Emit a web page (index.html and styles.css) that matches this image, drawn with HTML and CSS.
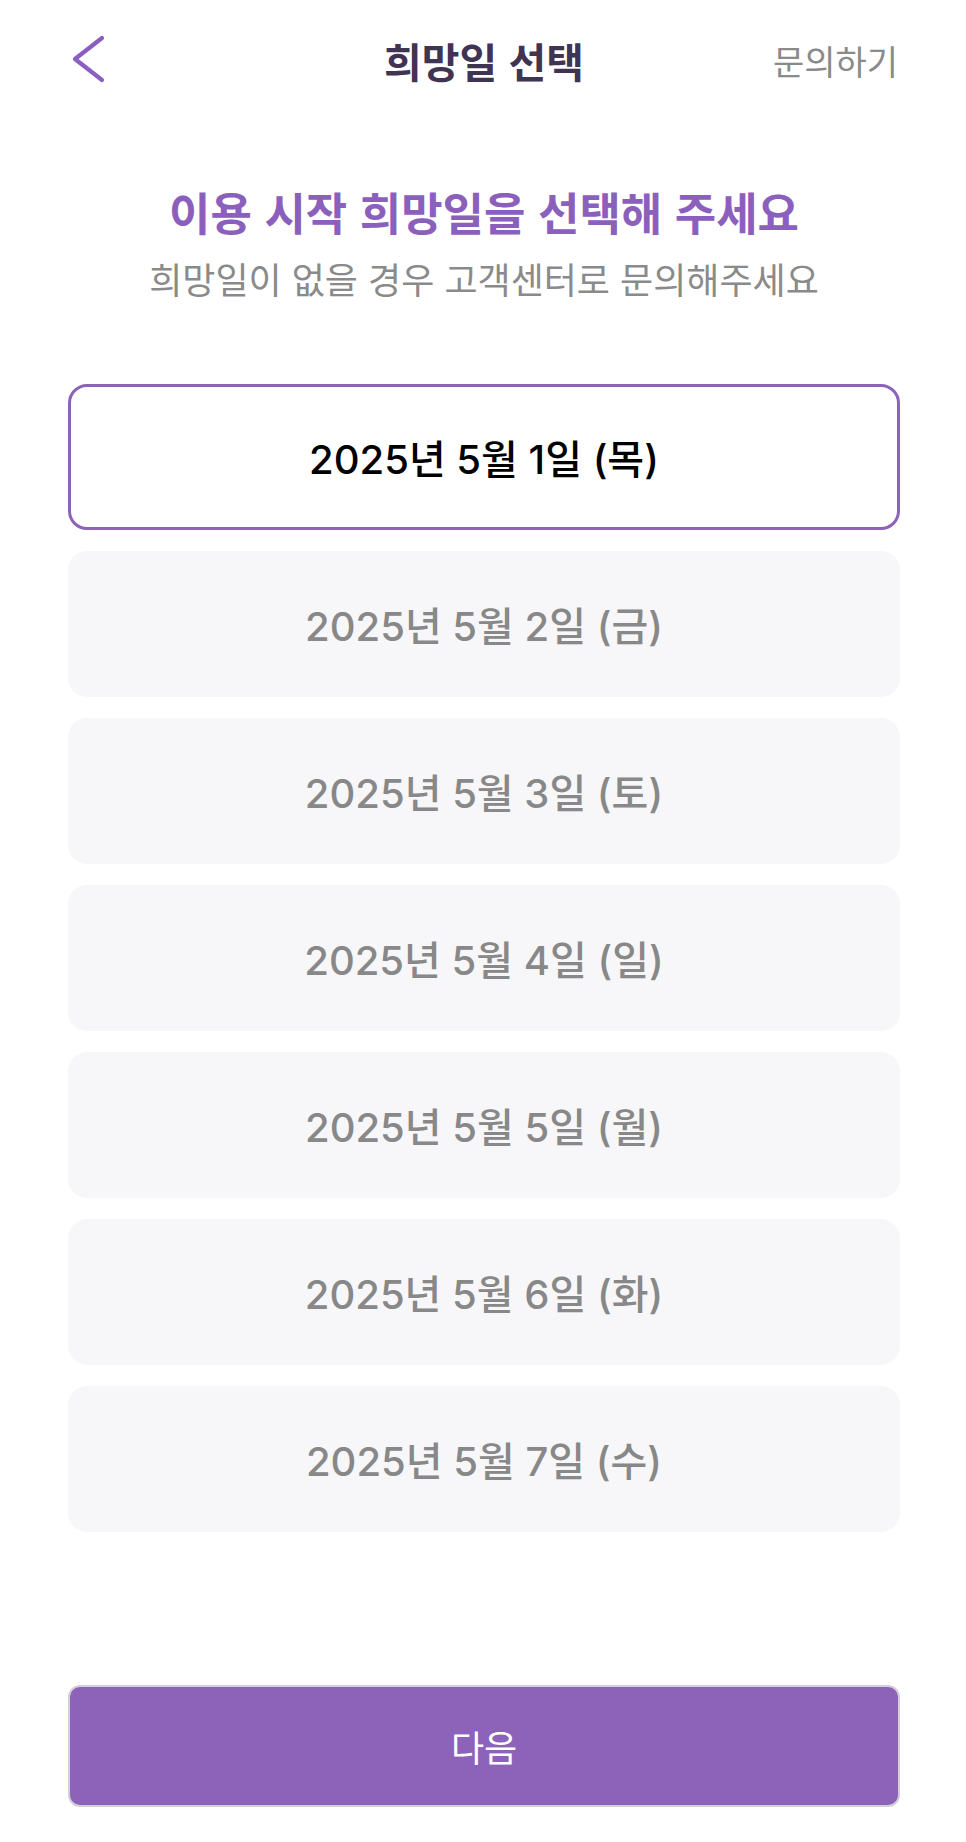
FILE: index.html
```html
<!DOCTYPE html>
<html lang="ko">
<head>
<meta charset="utf-8">
<title>희망일 선택</title>
<link rel="stylesheet" href="styles.css">
</head>
<body>
<div class="page">
  <header class="topbar">
    <button class="back" aria-label="뒤로">
      <svg width="36" height="50" viewBox="0 0 36 50"><path d="M31 3 L4 24 L31 45" fill="none" stroke="#8a5fc1" stroke-width="4.2" stroke-linecap="round" stroke-linejoin="round"/></svg>
    </button>
    <h1 class="title">희망일 선택</h1>
    <a class="inquiry">문의하기</a>
  </header>

  <section class="intro">
    <h2 class="heading">이용 시작 희망일을 선택해 주세요</h2>
    <p class="sub">희망일이 없을 경우 고객센터로 문의해주세요</p>
  </section>

  <ul class="dates">
    <li class="date selected">2025년 5월 1일 (목)</li>
    <li class="date">2025년 5월 2일 (금)</li>
    <li class="date">2025년 5월 3일 (토)</li>
    <li class="date">2025년 5월 4일 (일)</li>
    <li class="date">2025년 5월 5일 (월)</li>
    <li class="date">2025년 5월 6일 (화)</li>
    <li class="date">2025년 5월 7일 (수)</li>
  </ul>

  <button class="next">다음</button>
</div>
</body>
</html>
```

FILE: styles.css
```css
* { box-sizing: border-box; }
html, body { margin: 0; padding: 0; background: #ffffff; }
body {
  font-family: Inter, "Noto Sans CJK KR", sans-serif;
  width: 966px;
}
.page {
  display: flex;
  flex-direction: column;
  padding: 0 66px 0 68px;
}
.topbar {
  height: 120px;
  display: grid;
  grid-template-columns: 1fr auto 1fr;
  align-items: center;
}
.back {
  justify-self: start;
  background: none;
  border: 0;
  padding: 0;
  margin-left: 3px;
  display: flex;
  cursor: pointer;
}
.title {
  margin: 0;
  font-family: "Noto Sans CJK KR", sans-serif;
  font-size: 41px;
  font-weight: 700;
  color: #3f3452;
}
.inquiry {
  justify-self: end;
  font-family: "Noto Sans CJK KR", sans-serif;
  font-size: 34px;
  color: #8a8a8a;
  margin-right: 2px;
}
.intro {
  margin-top: 64px;
  text-align: center;
}
.heading {
  margin: 0;
  font-family: "Noto Sans CJK KR", sans-serif;
  font-size: 45px;
  line-height: 56px;
  font-weight: 700;
  color: #8b60bd;
}
.sub {
  margin: 16px 0 0;
  font-family: "Noto Sans CJK KR", sans-serif;
  font-size: 36px;
  line-height: 44px;
  color: #8a8a8a;
}
.dates {
  list-style: none;
  margin: 84px 0 0;
  padding: 0;
  display: flex;
  flex-direction: column;
  gap: 21px;
}
.date {
  height: 146px;
  border-radius: 19px;
  background: #f7f7f9;
  display: flex;
  align-items: center;
  justify-content: center;
  font-size: 40px;
  font-weight: 500;
  color: #888888;
}
.date.selected {
  background: #ffffff;
  border: 3.5px solid #8d63b9;
  color: #000000;
}
.next {
  margin-top: 153px;
  height: 122px;
  border-radius: 12px;
  background: #8c63b8;
  border: 2px solid #d3cfd9;
  color: #ffffff;
  font-family: "Noto Sans CJK KR", sans-serif;
  font-size: 36px;
  font-weight: 400;
}
```
